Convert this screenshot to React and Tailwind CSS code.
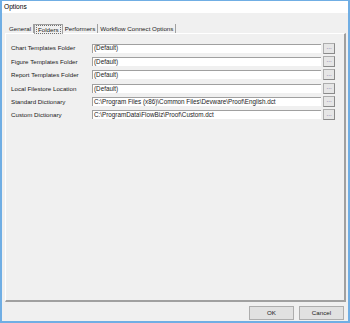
import React from "react";

const rows = [
  { label: "Chart Templates Folder", value: "(Default)" },
  { label: "Figure Templates Folder", value: "(Default)" },
  { label: "Report Templates Folder", value: "(Default)" },
  { label: "Local Filestore Location", value: "(Default)" },
  { label: "Standard Dictionary", value: "C:\\Program Files (x86)\\Common Files\\Devware\\Proof\\English.dct" },
  { label: "Custom Dictionary", value: "C:\\ProgramData\\FlowBiz\\Proof\\Custom.dct" },
];

const tabs = ["General", "Folders", "Performers", "Workflow Connect Options"];

export default function App() {
  return (
    <div className="w-[350px] h-[323px] bg-[#f0f0f0] border-x-2 border-b-2 border-t border-[#70aee4] flex flex-col font-['Liberation_Sans',Arial,sans-serif] text-[6.2px] text-[#1a1a1a] overflow-hidden">
      {/* title bar */}
      <div className="h-[12px] bg-white flex items-center pl-[2px] text-[6.6px] text-black">Options</div>

      <div className="flex-1 flex flex-col pl-[3px] pr-[2px]">
        {/* tabs */}
        <div className="flex items-end h-[20px] pl-[2px]">
          {tabs.map((t) =>
            t === "Folders" ? (
              <div
                key={t}
                className="h-[10px] px-[1px] flex items-center bg-[#f0f0f0] border border-[#a0a0a0] border-b-0 -mb-px relative z-10"
              >
                <span className="border border-dotted border-[#707070] px-px leading-[7px]">{t}</span>
              </div>
            ) : (
              <div key={t} className="h-[9px] px-[2px] flex items-center border-r border-[#a0a0a0]">
                {t}
              </div>
            )
          )}
        </div>

        {/* panel */}
        <div className="h-[269px] border-l border-t border-white border-r-2 border-b-2 border-r-[#a0a0a0] border-b-[#a0a0a0] flex flex-col pt-[9px] pl-[5px] pr-[9px] gap-[3.4px]">
          {rows.map((r) => (
            <div key={r.label} className="flex items-center h-[10px]">
              <div className="w-[81px] shrink-0">{r.label}</div>
              <div className="w-[230px] h-[9px] bg-white border-t border-l border-[#a0a0a0] flex items-center pl-px overflow-hidden whitespace-nowrap text-[6.3px] leading-none">
                {r.value}
              </div>
              <div className="ml-[2px] w-[12px] h-[11px] bg-[#e6e6e6] border border-[#adadad] border-r-[#8a8a8a] border-b-[#8a8a8a] flex items-center justify-center text-[#5a4a8a] leading-none pb-[2px]">
                ...
              </div>
            </div>
          ))}
        </div>

        {/* buttons */}
        <div className="flex justify-end gap-[5px] pr-[2px] mt-[4px]">
          <div className="w-[45px] h-[14px] bg-[#e1e1e1] border border-[#adadad] flex items-center justify-center">OK</div>
          <div className="w-[45px] h-[14px] bg-[#e1e1e1] border border-[#adadad] flex items-center justify-center">Cancel</div>
        </div>
      </div>
    </div>
  );
}
